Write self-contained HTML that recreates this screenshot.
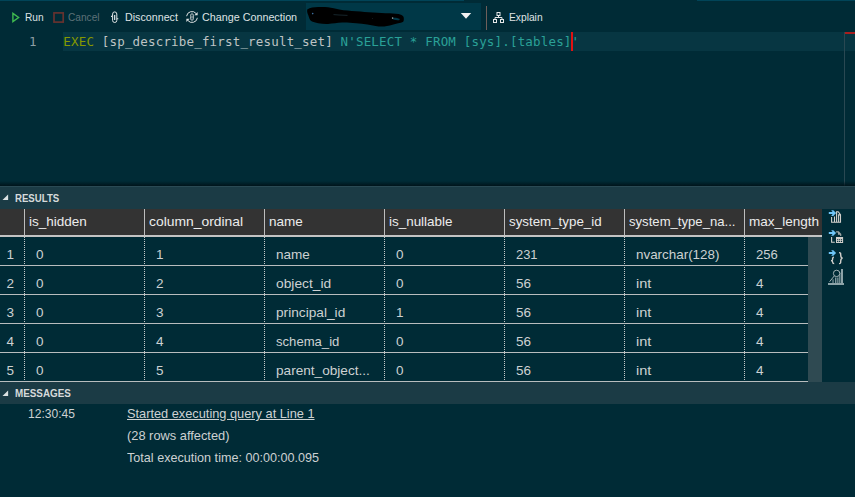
<!DOCTYPE html>
<html lang="en">
<head>
<meta charset="utf-8">
<title>Query editor</title>
<style>
html,body{margin:0;padding:0;}
body{width:855px;height:497px;overflow:hidden;background:#002b36;position:relative;
  font-family:"Liberation Sans",sans-serif;color:#cfd3d4;}
.abs{position:absolute;}
.t{position:absolute;white-space:nowrap;line-height:16px;height:16px;}
/* toolbar */
.tb{font-size:11px;color:#dfe3e4;top:9px;}
.tb.dim{color:#5d7178;}
/* editor */
.code{font-family:"DejaVu Sans Mono","Liberation Mono",monospace;font-size:12.5px;letter-spacing:0.175px;
  line-height:19px;height:19px;top:32px;}
.kw{color:#859900;}
.id{color:#bfc4c4;}
.str{color:#2aa198;}
/* panel headers */
.ph{left:0;width:855px;background:#1b3b45;}
.pht{font-size:11px;font-weight:bold;color:#d6dadb;left:15px;}
/* grid */
.hc{font-size:13.5px;color:#ececec;top:214px;}
.c{font-size:13.5px;color:#cdd1d2;}
.r1{top:247px}.r2{top:276px}.r3{top:305px}.r4{top:334px}.r5{top:363px}
.msg{font-size:13px;color:#cdd1d2;}
.hl{position:absolute;left:0;width:808px;height:1px;background:#b9bdbe;}
.vs{position:absolute;top:209px;width:1px;height:26px;background:#bdbdbd;}
.vd{position:absolute;top:237px;width:1px;height:145px;
  background:repeating-linear-gradient(to bottom,#c6cacb 0,#c6cacb 1px,transparent 1px,transparent 2px);}
.t{transform-origin:0 50%;}
#t_run{transform:scaleX(0.921)}#t_cancel{transform:scaleX(0.921)}#t_disc{transform:scaleX(0.972)}#t_chg{transform:scaleX(0.978)}#t_expl{transform:scaleX(0.931)}
#t_res{transform:scaleX(0.875)}#t_msg{transform:scaleX(0.896)}
#h1{transform:scaleX(1.001)}#h2{transform:scaleX(1.028)}#h3{transform:scaleX(1.002)}#h4{transform:scaleX(0.995)}#h5{transform:scaleX(0.987)}#h6{transform:scaleX(0.972)}#h7{transform:scaleX(1.004)}
#c13{transform:scaleX(1.002)}#c15{transform:scaleX(0.955)}#c16{transform:scaleX(0.993)}#c17{transform:scaleX(0.967)}#c23{transform:scaleX(1.021)}#c33{transform:scaleX(1.014)}#c43{transform:scaleX(0.970)}#c53{transform:scaleX(1.008)}
#m0{transform:scaleX(0.927)}#m1{transform:scaleX(0.983)}#m2{transform:scaleX(0.987)}#m3{transform:scaleX(0.970)}
.int{transform:scaleX(1.08)}
</style>
</head>
<body>
<!-- top strip -->
<div class="abs" style="left:0;top:0;width:464px;height:1px;background:#014458"></div><div class="abs" style="left:697px;top:0;width:158px;height:1px;background:#014458"></div>

<!-- toolbar -->
<svg class="abs" style="left:11px;top:11px" width="11" height="13" viewBox="0 0 11 13"><path d="M1.9 2.4 L7.6 6.5 L1.9 10.6 Z" fill="none" stroke="#3fb950" stroke-width="1.4" stroke-linejoin="miter"/></svg>
<span class="t tb" id="t_run" style="left:25px">Run</span>
<svg class="abs" style="left:52px;top:11px" width="13" height="13" viewBox="0 0 13 13"><rect x="2" y="1.9" width="9.2" height="9.2" fill="none" stroke="#66322f" stroke-width="1.7"/></svg>
<span class="t tb dim" id="t_cancel" style="left:68px">Cancel</span>
<svg class="abs" style="left:108px;top:9px" width="14" height="16" viewBox="108 9 14 16" fill="none" stroke="#dfe3e4" stroke-width="1"><path d="M112.6 16.4 V14 a2.1 2.1 0 0 1 4.2 0 V20.4 a2.1 2.1 0 0 1 -4.2 0 V16.4"/><path d="M111 16.4 H112.6 M116.8 18.8 H118.3" stroke-width="1.1"/><path d="M114.7 15 V20" stroke="#f4f6f6" stroke-width="1.1"/></svg>
<span class="t tb" id="t_disc" style="left:124.5px">Disconnect</span>
<svg class="abs" style="left:185.4px;top:10.2px" width="14" height="14" viewBox="0 0 14 14" fill="none" stroke="#dfe3e4" stroke-width="1"><path d="M1.6 6.2 A5.4 5.4 0 0 1 11.2 3.6"/><path d="M12.4 7.8 A5.4 5.4 0 0 1 2.8 10.4"/><path d="M12.6 2 V5.2 H9.4 Z" fill="#dfe3e4" stroke="none"/><path d="M1.4 12 V8.8 H4.6 Z" fill="#dfe3e4" stroke="none"/><path d="M5.6 6.4 V5.2 a1.4 1.4 0 0 1 2.8 0 V8.8 a1.4 1.4 0 0 1 -2.8 0 V6.4" stroke-width="0.8"/><path d="M7 5.6 V8.6" stroke-width="0.8"/></svg>
<span class="t tb" id="t_chg" style="left:202px">Change Connection</span>

<div class="abs" style="left:306px;top:3px;width:175px;height:27px;background:#003847"></div>
<svg class="abs" style="left:300px;top:0px" width="120" height="34" viewBox="300 0 120 34"><path d="M307.2 9.4 C310 7.6 314 7.2 318.2 7 C322 6.8 325 6.9 328 7.3 C332 7.9 335.5 8.8 339.3 9.5 C345 10.5 350 10.8 356.1 11.2 C362 11.6 367 12.1 373 12.4 C379 12.7 384 12.9 389.8 13.3 C394 13.6 398 13.8 401 14.7 C403 15.5 403.9 16.6 403.8 18.2 C403.9 19.8 403.8 20.8 403.2 21.8 C402 22.8 400 23 398.2 23.3 C394 24.2 391 25.4 387 26 C384 26.6 381.5 26.6 378.6 26.4 C374.5 26.1 371 25.2 367.4 24.6 C363.5 23.9 360 23.5 356.1 23.2 C351 22.7 347 22.4 342.1 22.5 C337 22.6 333 23.7 328 23.9 C324.5 24 321.5 23.8 318.2 23.2 C315.5 22.7 313 22.2 311.2 21 C309.6 19.6 309 17.4 308.4 15.4 C307.8 13.6 306.8 12.4 307.2 9.4 Z M392.8 18 C394.5 17.4 397.5 17.9 399.5 18.8 C399.8 19.6 399.6 20 399 20.3 C397 20.2 394.5 19.8 393 19.2 C392.6 18.8 392.5 18.3 392.8 18 Z" fill="#000" fill-rule="evenodd"/><path d="M333.5 14.6 L339 15 L347.5 15.4" stroke="#20353d" stroke-width="0.7" fill="none"/><circle cx="312.7" cy="13.6" r="0.8" fill="#3d6fa0"/><circle cx="392.6" cy="18.1" r="0.8" fill="#9aa4a8"/><circle cx="372.3" cy="18.3" r="0.4" fill="#3a4a50"/></svg>
<svg class="abs" style="left:460px;top:12px" width="12" height="8" viewBox="0 0 12 8"><path d="M0.8 1 H11.2 L6 6.8 Z" fill="#f2f2f2"/></svg>
<div class="abs" style="left:486px;top:6px;width:1px;height:24px;background:#6f5f5a"></div>
<svg class="abs" style="left:492px;top:11px" width="14" height="14" viewBox="0 0 14 14" fill="none" stroke="#e4e7e8" stroke-width="1"><rect x="5" y="1.5" width="3" height="3"/><rect x="1.5" y="8.5" width="3" height="3"/><rect x="8.5" y="8.5" width="3" height="3"/><path d="M6.5 4.5 V6.5 M3 8.5 V6.5 H10 V8.5"/></svg>
<span class="t tb" id="t_expl" style="left:509px">Explain</span>

<!-- editor -->
<div class="abs" style="left:63px;top:32px;width:792px;height:19px;background:#073642"></div>
<span class="t code" id="t_ln" style="left:29px;color:#8c9ea3">1</span>
<span class="t code" id="t_code" style="left:63.3px"><span class="kw">EXEC</span> <span class="id">[sp_describe_first_result_set]</span> <span class="str">N'SELECT * FROM [sys].[tables]'</span></span>
<div class="abs" style="left:571px;top:32px;width:2px;height:19px;background:#e01212"></div>
<div class="abs" style="left:844px;top:32px;width:1px;height:155px;background:#294852"></div>
<div class="abs" style="left:845px;top:32px;width:10px;height:2px;background:#a81e1e"></div>
<div class="abs" style="left:0;top:181px;width:855px;height:5px;background:linear-gradient(to bottom,rgba(0,20,27,0),rgba(0,16,22,0.85))"></div>

<!-- results header -->
<div class="abs ph" style="top:186px;height:23px"></div><div class="abs" style="left:0;top:186px;width:855px;height:1px;background:#2a4a54"></div>
<svg class="abs" style="left:2px;top:194px" width="7" height="7" viewBox="0 0 7 7"><path d="M6.1 0.4 V6.1 H0.5 Z" fill="#dde1e2"/></svg>
<span class="t pht" id="t_res" style="top:190px">RESULTS</span>

<!-- grid header -->
<div class="abs" style="left:0;top:209px;width:822px;height:26px;background:#333333"></div>
<div class="abs" style="left:0;top:235px;width:822px;height:2px;background:#c3c3c3"></div>
<div class="vs" style="left:24px"></div><div class="vs" style="left:144px"></div><div class="vs" style="left:264px"></div><div class="vs" style="left:384px"></div><div class="vs" style="left:504px"></div><div class="vs" style="left:624px"></div><div class="vs" style="left:744px"></div>
<span class="t hc" id="h1" style="left:29px">is_hidden</span>
<span class="t hc" id="h2" style="left:149px">column_ordinal</span>
<span class="t hc" id="h3" style="left:269px">name</span>
<span class="t hc" id="h4" style="left:389px">is_nullable</span>
<span class="t hc" id="h5" style="left:509px">system_type_id</span>
<span class="t hc" id="h6" style="left:629px">system_type_na...</span>
<span class="t hc" id="h7" style="left:749px">max_length</span>

<!-- grid rows -->
<div class="vd" style="left:24px"></div><div class="vd" style="left:144px"></div><div class="vd" style="left:264px"></div><div class="vd" style="left:384px"></div><div class="vd" style="left:504px"></div><div class="vd" style="left:624px"></div><div class="vd" style="left:744px"></div>
<div class="hl" style="top:265px"></div><div class="hl" style="top:294px"></div><div class="hl" style="top:323px"></div><div class="hl" style="top:352px"></div><div class="hl" style="top:381px"></div>
<div class="abs" style="left:808px;top:237px;width:14px;height:145px;background:#2f4a52"></div>

<span class="t c r1" style="left:6.5px">1</span><span class="t c r1" style="left:36px">0</span><span class="t c r1" style="left:156px">1</span><span class="t c r1" id="c13" style="left:276px">name</span><span class="t c r1" style="left:396px">0</span><span class="t c r1" id="c15" style="left:516px">231</span><span class="t c r1" id="c16" style="left:636px">nvarchar(128)</span><span class="t c r1" id="c17" style="left:756px">256</span>
<span class="t c r2" style="left:6.5px">2</span><span class="t c r2" style="left:36px">0</span><span class="t c r2" style="left:156px">2</span><span class="t c r2" id="c23" style="left:276px">object_id</span><span class="t c r2" style="left:396px">0</span><span class="t c r2" style="left:516px">56</span><span class="t c r2 int" style="left:636px">int</span><span class="t c r2" style="left:756px">4</span>
<span class="t c r3" style="left:6.5px">3</span><span class="t c r3" style="left:36px">0</span><span class="t c r3" style="left:156px">3</span><span class="t c r3" id="c33" style="left:276px">principal_id</span><span class="t c r3" style="left:396px">1</span><span class="t c r3" style="left:516px">56</span><span class="t c r3 int" style="left:636px">int</span><span class="t c r3" style="left:756px">4</span>
<span class="t c r4" style="left:6.5px">4</span><span class="t c r4" style="left:36px">0</span><span class="t c r4" style="left:156px">4</span><span class="t c r4" id="c43" style="left:276px">schema_id</span><span class="t c r4" style="left:396px">0</span><span class="t c r4" style="left:516px">56</span><span class="t c r4 int" style="left:636px">int</span><span class="t c r4" style="left:756px">4</span>
<span class="t c r5" style="left:6.5px">5</span><span class="t c r5" style="left:36px">0</span><span class="t c r5" style="left:156px">5</span><span class="t c r5" id="c53" style="left:276px">parent_object...</span><span class="t c r5" style="left:396px">0</span><span class="t c r5" style="left:516px">56</span><span class="t c r5 int" style="left:636px">int</span><span class="t c r5" style="left:756px">4</span>

<!-- action icons -->
<svg class="abs" style="left:824px;top:206px" width="31" height="84" viewBox="824 206 31 84">
<g fill="#6ec5f7">
<path id="arw" d="M828.8 212.1 H832.6 L831.2 210.3 H833.3 L836.1 213.1 L833.3 215.9 H831.2 L832.6 214.1 H828.8 Z"/>
<path d="M828.8 232 H832.6 L831.2 230.2 H833.3 L836.1 233 L833.3 235.8 H831.2 L832.6 234 H828.8 Z"/>
<path d="M828.8 252 H832.6 L831.2 250.2 H833.3 L836.1 253 L833.3 255.8 H831.2 L832.6 254 H828.8 Z"/>
</g>
<g fill="none" stroke="#d2cfcb" stroke-width="1.1">
<path d="M831.6 217 V222.3 H840.5 V214.6 L838.2 211.7 H836.6 V222.3 M834.5 216.4 V222.3 M838.6 222 V214.9 H840.5"/>
<path d="M836.1 231.2 H838.7 L841.3 234 V235.9 H840.1 V234.7 H838 V232.5 H836.1 Z" fill="#d2cfcb" fill-opacity="0.75" stroke="none"/>
<path d="M831.6 237 V242.3 H834.8"/>
<path d="M833.9 257.3 C832.4 257.3 832.6 258.6 832.6 259.4 C832.6 260.4 832.3 260.6 831 260.6 C832.3 260.6 832.6 261 832.6 262 C832.6 263 832.6 263.6 834.2 263.6" stroke-width="1.4"/>
<path d="M839 252.6 C840.8 252.6 840.7 253.6 840.7 255 C840.7 256.8 841 257.9 842.6 258.1 C841 258.3 840.7 259.4 840.7 261.2 C840.7 262.6 840.8 263.6 839 263.6" stroke-width="1.4"/>
</g>
<path d="M836 237 H843.1 V243 H836 Z M837.1 239.3 V240.3 H838.3 V239.3 Z M839.1 239.3 V240.3 H840.2 V239.3 Z M841 239.3 V240.3 H842.1 V239.3 Z M837.1 241.1 V242.1 H838.3 V241.1 Z M839.1 241.1 V242.1 H840.2 V241.1 Z M841 241.1 V242.1 H842.1 V241.1 Z" fill="#d2cfcb" fill-rule="evenodd"/>
<g fill="#8da3a8">
<rect x="828" y="283" width="16" height="2"/>
<rect x="841" y="269" width="2" height="14"/>
<rect x="839" y="272.5" width="1.5" height="10.5" opacity="0.8"/>
<rect x="837.2" y="277.5" width="1.3" height="5.5" opacity="0.9"/>
<rect x="835" y="277.5" width="1.4" height="5.5" opacity="0.9"/>
<rect x="832.4" y="279.3" width="1.3" height="3.7" opacity="0.8"/>
</g>
<circle cx="836.6" cy="273.4" r="3.2" fill="#002b36" stroke="#c6d0d2" stroke-width="0.8"/>
<path d="M834.3 275.9 L829.6 281.7" stroke="#b5c2c5" stroke-width="0.9" fill="none"/>
</svg>


<!-- messages -->
<div class="abs ph" style="top:382px;height:22px"></div>
<svg class="abs" style="left:2px;top:389.5px" width="7" height="7" viewBox="0 0 7 7"><path d="M6.1 0.4 V6.1 H0.5 Z" fill="#dde1e2"/></svg>
<span class="t pht" id="t_msg" style="top:385px">MESSAGES</span>
<span class="t msg" id="m0" style="left:28px;top:406px">12:30:45</span>
<span class="t msg" id="m1" style="left:127px;top:406px;text-decoration:underline">Started executing query at Line 1</span>
<span class="t msg" id="m2" style="left:127px;top:428px">(28 rows affected)</span>
<span class="t msg" id="m3" style="left:127px;top:450px">Total execution time: 00:00:00.095</span>
</body>
</html>
